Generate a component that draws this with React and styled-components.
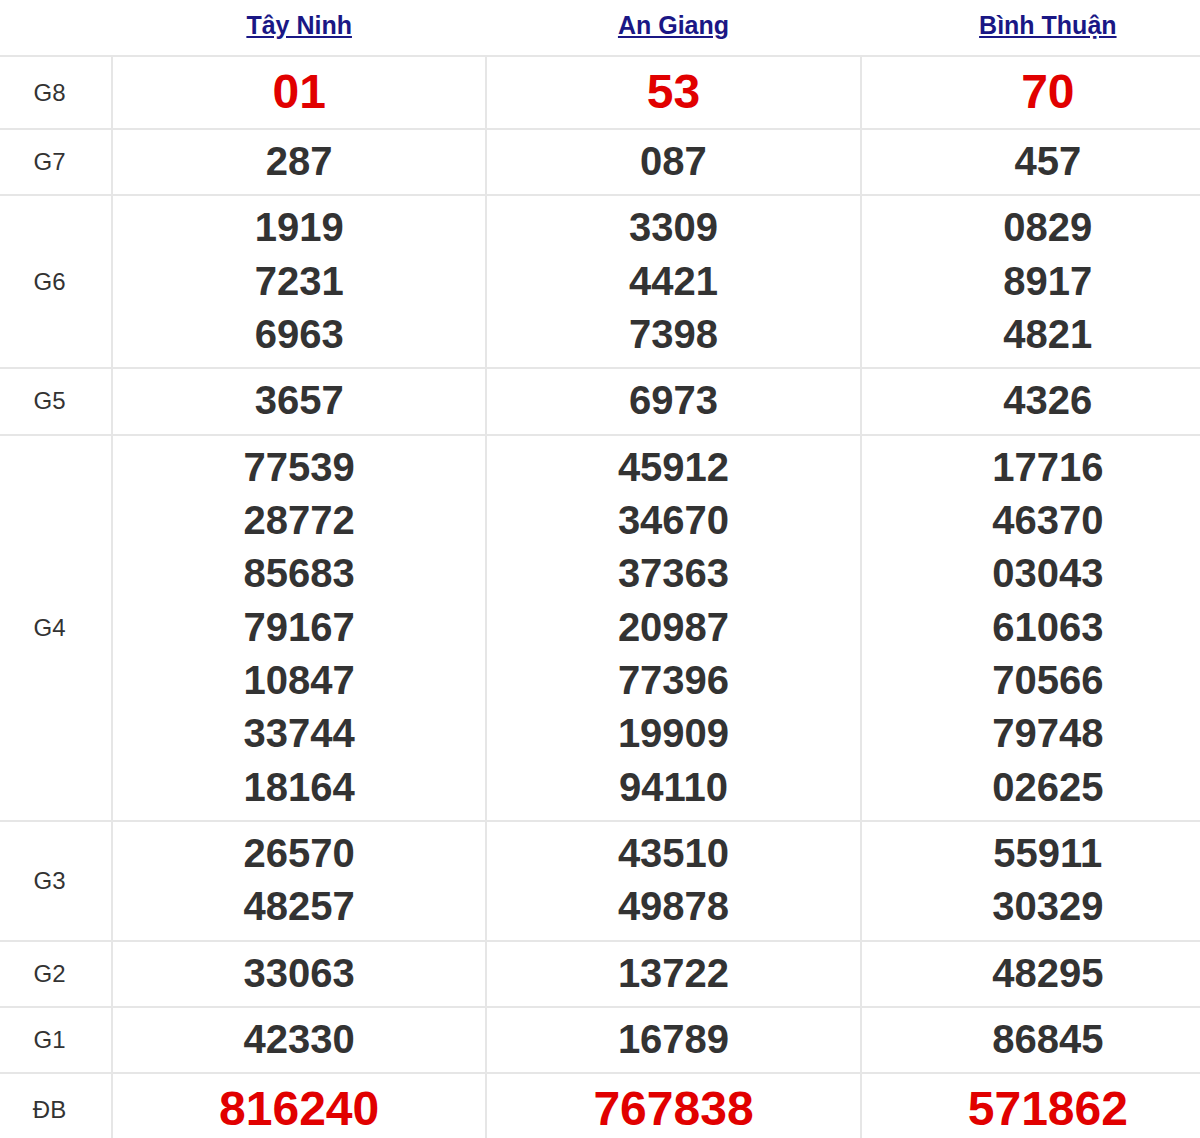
import React from 'react';
import styled, { createGlobalStyle } from 'styled-components';

const provinces = ['Tây Ninh', 'An Giang', 'Bình Thuận'];

const prizes = [
  { label: 'G8', big: true, values: [['01'], ['53'], ['70']] },
  { label: 'G7', values: [['287'], ['087'], ['457']] },
  {
    label: 'G6',
    values: [
      ['1919', '7231', '6963'],
      ['3309', '4421', '7398'],
      ['0829', '8917', '4821'],
    ],
  },
  { label: 'G5', values: [['3657'], ['6973'], ['4326']] },
  {
    label: 'G4',
    values: [
      ['77539', '28772', '85683', '79167', '10847', '33744', '18164'],
      ['45912', '34670', '37363', '20987', '77396', '19909', '94110'],
      ['17716', '46370', '03043', '61063', '70566', '79748', '02625'],
    ],
  },
  {
    label: 'G3',
    values: [
      ['26570', '48257'],
      ['43510', '49878'],
      ['55911', '30329'],
    ],
  },
  { label: 'G2', values: [['33063'], ['13722'], ['48295']] },
  { label: 'G1', values: [['42330'], ['16789'], ['86845']] },
  { label: 'ĐB', big: true, values: [['816240'], ['767838'], ['571862']] },
];

export default function App() {
  return (
    <>
      <GlobalStyle />
      <Results>
        <colgroup>
          <col style={{ width: 112 }} />
          <col />
          <col />
          <col />
        </colgroup>
        <thead>
          <tr>
            <HeadCell />
            {provinces.map((p) => (
              <HeadCell key={p}>
                <ProvinceLink href="#">{p}</ProvinceLink>
              </HeadCell>
            ))}
          </tr>
        </thead>
        <tbody>
          {prizes.map((row) => (
            <tr key={row.label}>
              <LabelCell>{row.label}</LabelCell>
              {row.values.map((nums, i) => (
                <NumberCell key={i}>
                  {nums.map((n) => (
                    <Num key={n} $big={row.big}>
                      {n}
                    </Num>
                  ))}
                </NumberCell>
              ))}
            </tr>
          ))}
        </tbody>
      </Results>
    </>
  );
}

const GlobalStyle = createGlobalStyle`
  body {
    margin: 0;
    background: #fff;
    overflow: hidden;
    font-family: "Liberation Sans", Arial, sans-serif;
  }
`;

const Results = styled.table`
  width: 1236px;
  table-layout: fixed;
  border-collapse: collapse;
`;

const HeadCell = styled.th`
  height: 51px;
  padding: 0 0 4px;
  text-align: center;
  vertical-align: middle;
  border-bottom: 2px solid #e6e6e6;
`;

const ProvinceLink = styled.a`
  font-size: 25px;
  font-weight: 700;
  color: #1a1785;
  text-decoration: underline;
  text-underline-offset: 2px;
`;

const LabelCell = styled.td`
  padding: 0 12px 0 0;
  text-align: center;
  vertical-align: middle;
  font-size: 24px;
  color: #333;
  border-bottom: 2px solid #e6e6e6;
  border-right: 2px solid #e6e6e6;
`;

const NumberCell = styled.td`
  padding: 5px 0 6px;
  text-align: center;
  vertical-align: middle;
  border-bottom: 2px solid #e6e6e6;
  border-right: 2px solid #e6e6e6;
`;

const Num = styled.div`
  font-size: ${(p) => (p.$big ? '48px' : '40px')};
  line-height: ${(p) => (p.$big ? '60px' : '53.33px')};
  font-weight: 700;
  color: ${(p) => (p.$big ? '#e10000' : '#333')};
`;
